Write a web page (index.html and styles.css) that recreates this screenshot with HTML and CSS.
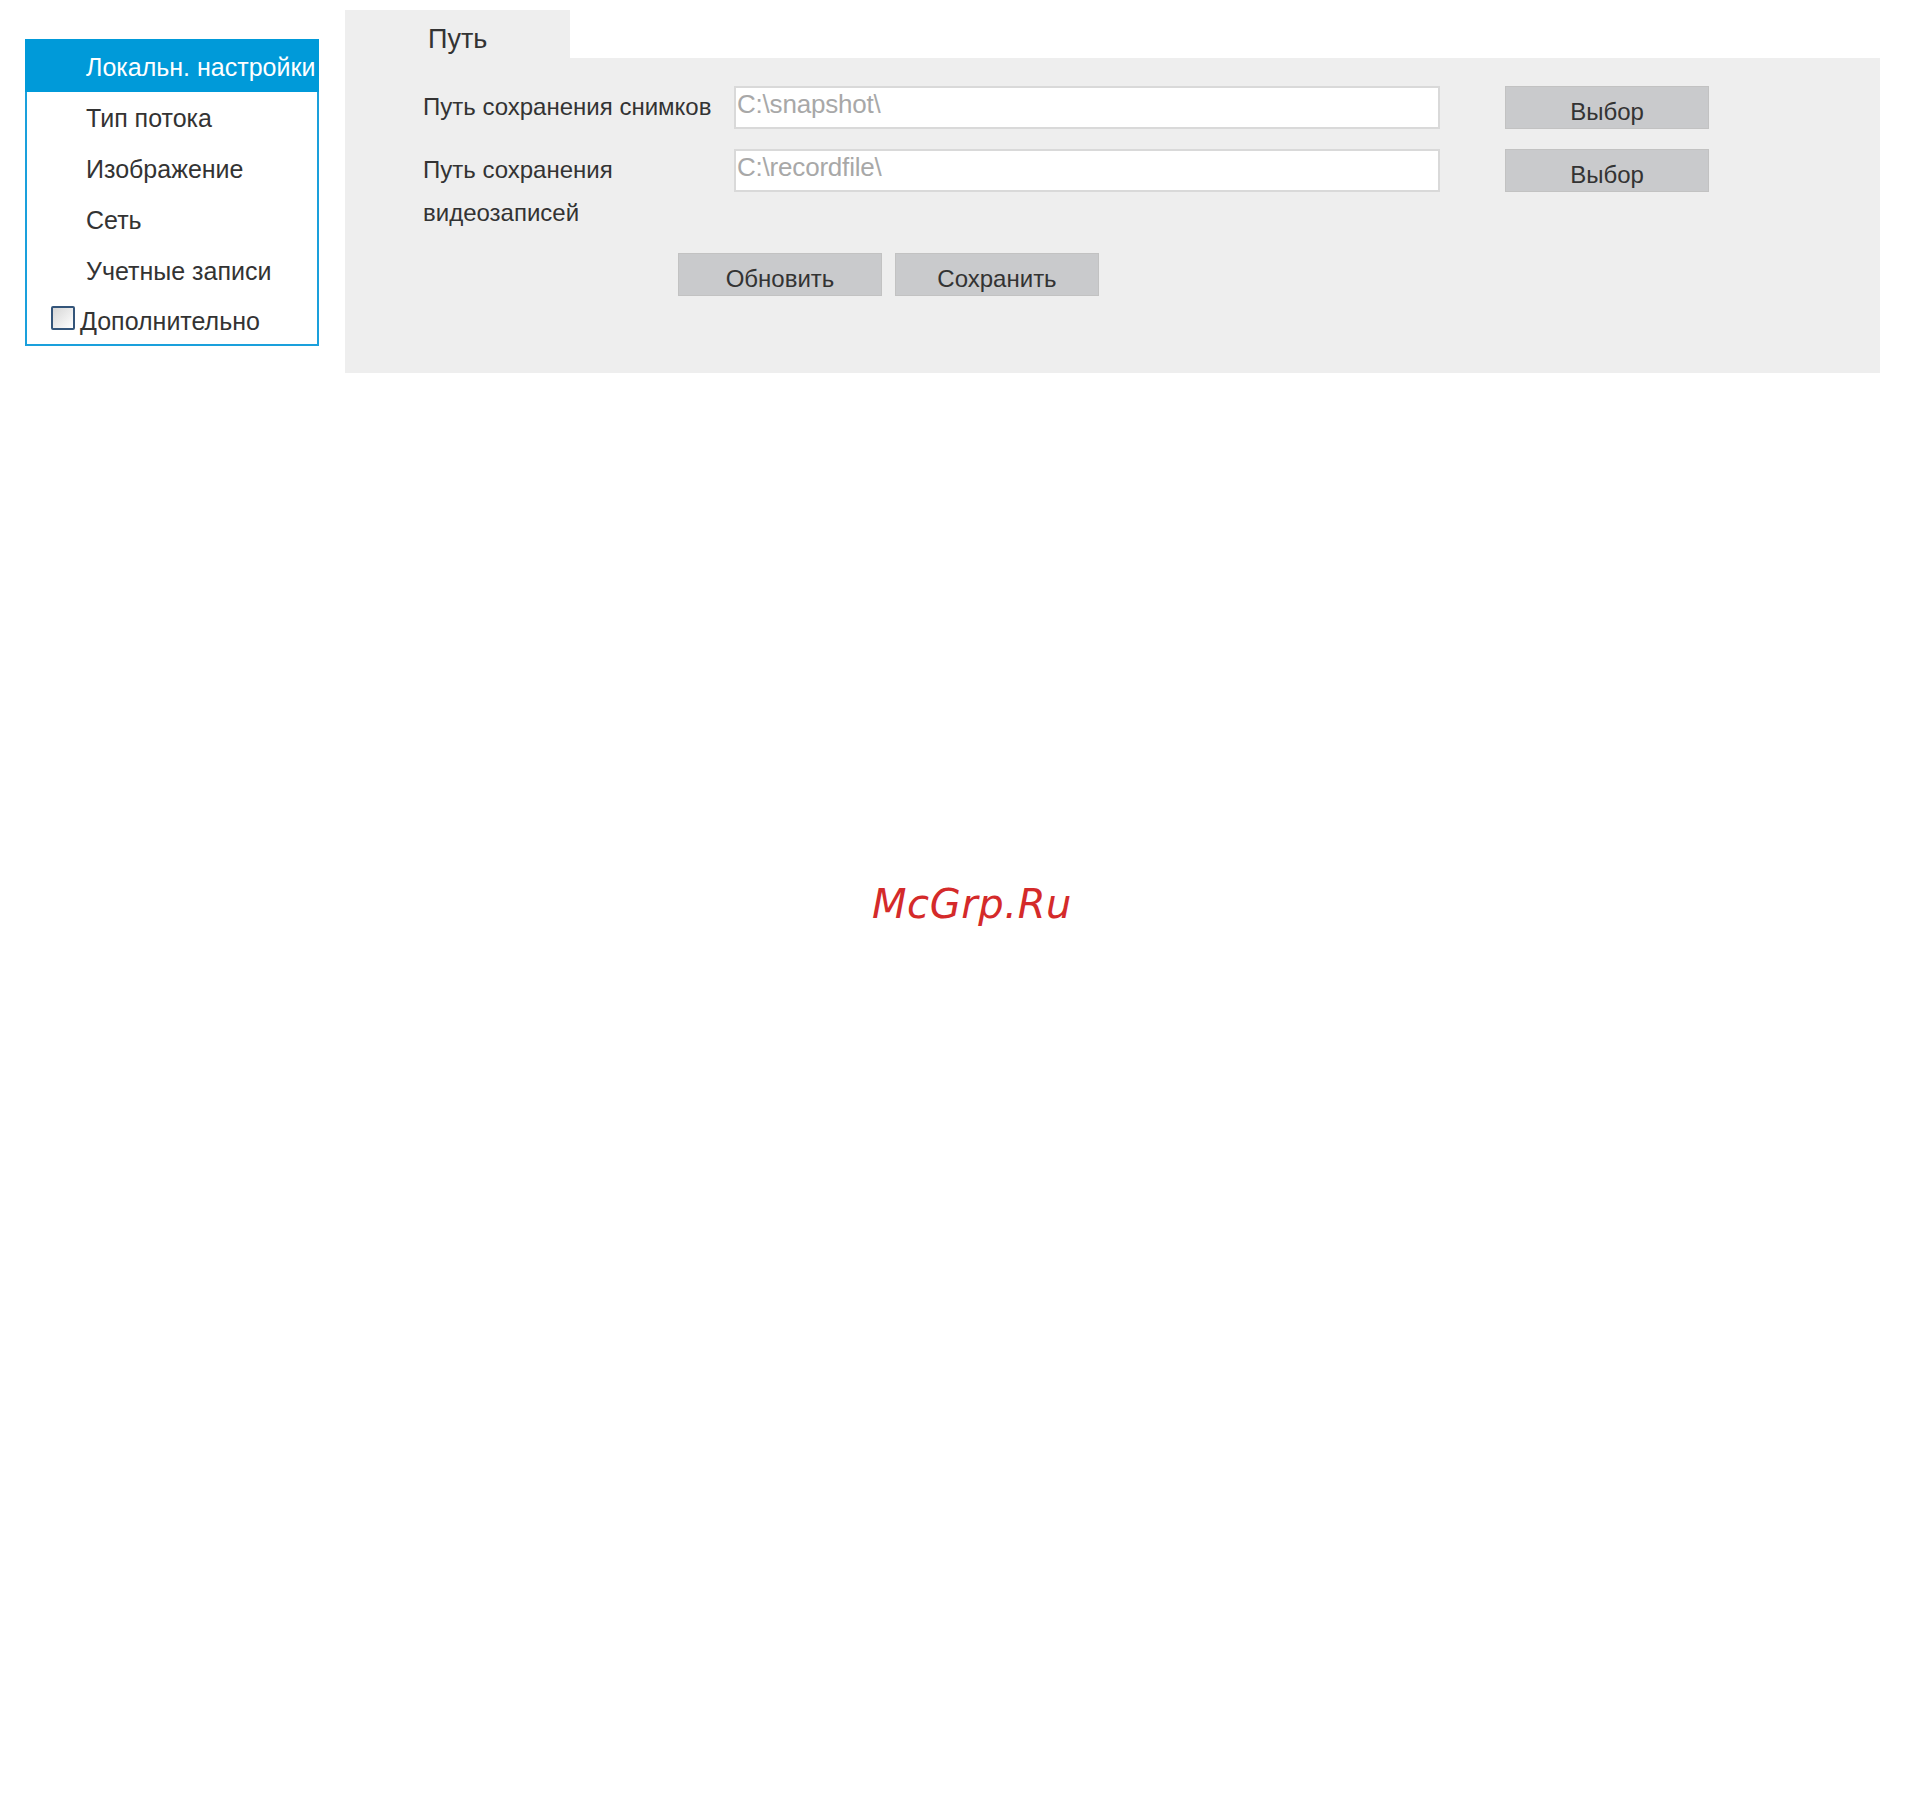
FILE: index.html
```html
<!DOCTYPE html>
<html lang="ru">
<head>
<meta charset="utf-8">
<title>Локальн. настройки</title>
<link rel="stylesheet" href="styles.css">
</head>
<body>
<div class="page">
  <nav class="sidebar">
    <div class="item active">Локальн. настройки</div>
    <div class="item">Тип потока</div>
    <div class="item">Изображение</div>
    <div class="item">Сеть</div>
    <div class="item">Учетные записи</div>
    <div class="item extra"><span class="check"></span>Дополнительно</div>
  </nav>
  <section class="panel">
    <div class="tabs"><div class="tab">Путь</div></div>
    <div class="body">
      <div class="row">
        <div class="label">Путь сохранения снимков</div>
        <div class="input">C:\snapshot\</div>
        <div class="btn pick">Выбор</div>
      </div>
      <div class="row">
        <div class="label">Путь сохранения<br>видеозаписей</div>
        <div class="input">C:\recordfile\</div>
        <div class="btn pick">Выбор</div>
      </div>
      <div class="actions">
        <div class="btn">Обновить</div>
        <div class="btn">Сохранить</div>
      </div>
    </div>
  </section>
</div>
<div class="watermark">McGrp.Ru</div>
</body>
</html>
```
FILE: styles.css
```css
html, body {
  margin: 0;
  padding: 0;
  background: #ffffff;
}
body {
  font-family: "Liberation Sans", Arial, sans-serif;
  font-size: 24px;
  color: #333333;
  width: 1928px;
  height: 1804px;
  position: relative;
}
.page {
  display: flex;
  align-items: flex-start;
}
.sidebar {
  margin: 39px 0 0 25px;
  width: 290px;
  border: 2px solid #1aa0dc;
  display: flex;
  flex-direction: column;
  font-size: 25px;
}
.item {
  height: 51px;
  line-height: 53px;
  padding-left: 59px;
  white-space: nowrap;
  overflow: hidden;
  color: #333333;
}
.item.active {
  background: #009ad9;
  color: #ffffff;
  margin: -2px -2px 0 -2px;
  padding-left: 61px;
  height: 53px;
  line-height: 56px;
}
.item.extra {
  height: 46px;
  padding-left: 24px;
  display: flex;
  align-items: center;
  gap: 5px;
  line-height: normal;
  padding-top: 2px;
}
.check {
  width: 20px;
  height: 20px;
  border: 2px solid #34557a;
  border-radius: 2px;
  background: linear-gradient(135deg, #d6d6d6, #ffffff);
  flex: none;
  margin-top: -6px;
}
.panel {
  margin: 10px 0 0 26px;
  width: 1535px;
}
.tabs {
  display: flex;
}
.tab {
  width: 142px;
  height: 48px;
  padding-left: 83px;
  background: #eeeeee;
  font-size: 27px;
  line-height: 58px;
  color: #333333;
}
.body {
  background: #eeeeee;
  height: 315px;
  box-sizing: border-box;
  padding: 28px 0 0 78px;
  display: flex;
  flex-direction: column;
  gap: 20px;
}
.row {
  display: flex;
  align-items: flex-start;
}
.label {
  width: 311px;
  line-height: 43px;
  margin-top: -1px;
}
.input {
  width: 701px;
  height: 39px;
  border: 2px solid #d9d9d9;
  background: #ffffff;
  color: #a8a8a8;
  font-size: 26px;
  line-height: 33px;
  padding-left: 1px;
  letter-spacing: -0.2px;
}
.btn {
  width: 202px;
  height: 41px;
  border: 1px solid #c2c2c2;
  background: #c9cacc;
  color: #333333;
  text-align: center;
  line-height: 50px;
}
.pick {
  margin-left: 65px;
}
.actions {
  display: flex;
  gap: 13px;
  margin-left: 255px;
  margin-top: -1px;
}
.watermark {
  position: absolute;
  left: 872px;
  top: 881px;
  font-family: "DejaVu Sans", sans-serif;
  font-style: italic;
  font-size: 40px;
  color: #d42a2a;
  letter-spacing: 0.6px;
}
```
